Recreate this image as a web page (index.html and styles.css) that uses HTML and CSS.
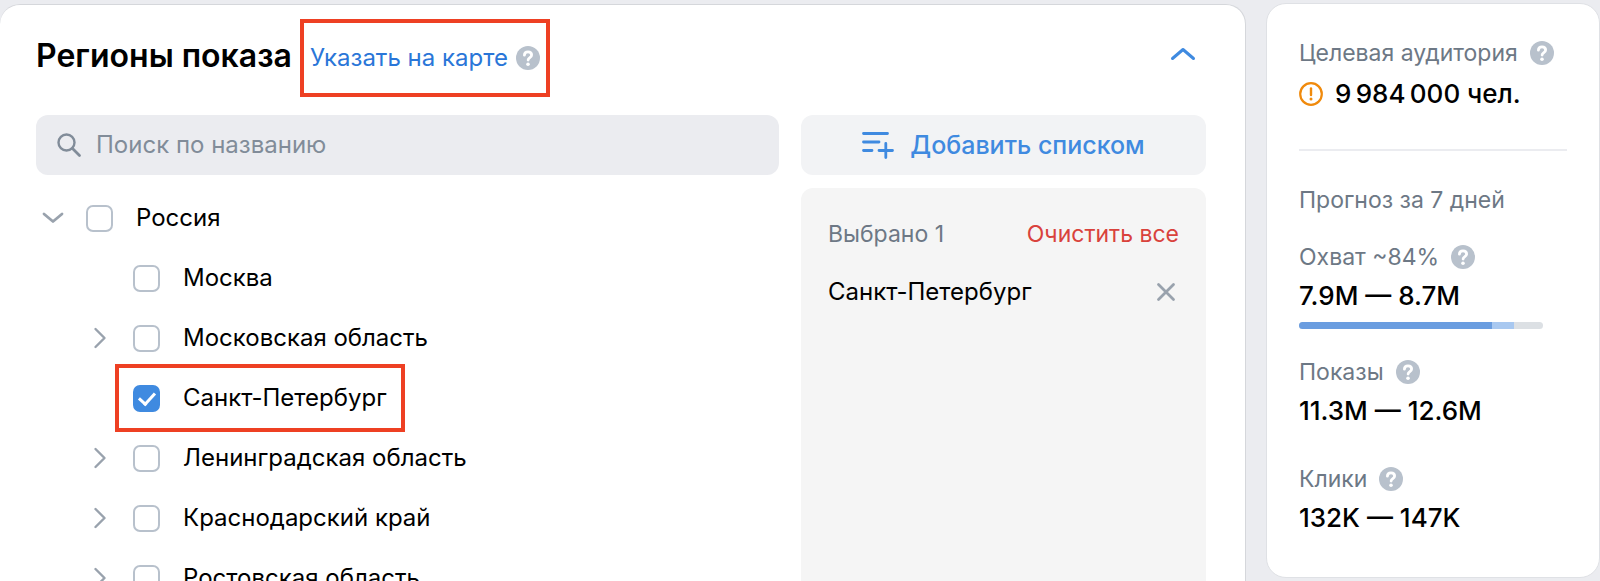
FILE: index.html
```html
<!DOCTYPE html>
<html lang="ru">
<head>
    <meta charset="UTF-8">
    <meta name="viewport" content="width=device-width, initial-scale=1.0">
    <title>Регионы показа</title>
    <link rel="stylesheet" href="styles.css">
</head>
<body>

<!-- Общие иконки -->
<svg class="sprite" aria-hidden="true">
    <symbol id="icon-help" viewBox="0 0 24 24">
        <circle cx="12" cy="12" r="12" fill="#b8c1cc"/>
        <path d="M8.400 9.200C8.400 7 10 5.800 12 5.800s3.600 1.200 3.600 3.100c0 1.400-.8 2.100-1.800 2.800-1.200.8-1.700 1.300-1.700 2.300" fill="none" stroke="#fff" stroke-width="2.800" stroke-linecap="round"/>
        <circle cx="12" cy="18.200" r="1.800" fill="#fff"/>
    </symbol>
    <symbol id="icon-right" viewBox="0 0 14 22">
        <path d="M2.500 2l9 9-9 9" fill="none" stroke="#99a2ad" stroke-width="2.400" stroke-linecap="round" stroke-linejoin="round"/>
    </symbol>
</svg>

<main class="regions">
    <header class="regions-header">
        <h2>Регионы показа</h2>
        <div class="map-link">
            <a href="#map">Указать на карте</a>
            <svg class="help"><use href="#icon-help"/></svg>
        </div>
        <button class="collapse" type="button" aria-label="Свернуть">
            <svg width="26" height="14" viewBox="0 0 26 14"><path d="M2.500 11.500L13 2.500l10.500 9" fill="none" stroke="#3f8ae0" stroke-width="3" stroke-linecap="round" stroke-linejoin="round"/></svg>
        </button>
    </header>

    <div class="regions-grid">
        <label class="search">
            <svg width="26" height="26" viewBox="0 0 26 26"><circle cx="10.500" cy="10.500" r="8" fill="none" stroke="#818c99" stroke-width="2.400"/><path d="M16.500 16.500l7 7" stroke="#818c99" stroke-width="2.800" stroke-linecap="round"/></svg>
            <input type="search" placeholder="Поиск по названию" aria-label="Поиск по названию">
        </label>

        <button class="add-list" type="button">
            <svg width="32" height="28" viewBox="0 0 32 28"><path d="M1.500 2.500h24M1.500 11h15.500M1.500 19.500h8.500M17 19.500h13.500M23.800 12.500v14" fill="none" stroke="#3f8ae0" stroke-width="2.800" stroke-linecap="round"/></svg>
            Добавить списком
        </button>

        <ul class="tree">
            <li class="row root">
                <button class="toggle" type="button" aria-label="Свернуть Россия">
                    <svg width="22" height="12" viewBox="0 0 22 12"><path d="M2 2l9 7.500L20 2" fill="none" stroke="#99a2ad" stroke-width="2.800" stroke-linecap="round" stroke-linejoin="round"/></svg>
                </button>
                <label><input type="checkbox">Россия</label>
            </li>
            <li class="row">
                <span class="toggle"></span>
                <label><input type="checkbox">Москва</label>
            </li>
            <li class="row">
                <button class="toggle" type="button" aria-label="Раскрыть Московская область"><svg class="arrow"><use href="#icon-right"/></svg></button>
                <label><input type="checkbox">Московская область</label>
            </li>
            <li class="row">
                <span class="toggle"></span>
                <label class="marked"><input type="checkbox" checked>Санкт-Петербург</label>
            </li>
            <li class="row">
                <button class="toggle" type="button" aria-label="Раскрыть Ленинградская область"><svg class="arrow"><use href="#icon-right"/></svg></button>
                <label><input type="checkbox">Ленинградская область</label>
            </li>
            <li class="row">
                <button class="toggle" type="button" aria-label="Раскрыть Краснодарский край"><svg class="arrow"><use href="#icon-right"/></svg></button>
                <label><input type="checkbox">Краснодарский край</label>
            </li>
            <li class="row">
                <button class="toggle" type="button" aria-label="Раскрыть Ростовская область"><svg class="arrow"><use href="#icon-right"/></svg></button>
                <label><input type="checkbox">Ростовская область</label>
            </li>
        </ul>

        <section class="selected">
            <div class="selected-head">
                <span>Выбрано 1</span>
                <button class="clear" type="button">Очистить все</button>
            </div>
            <div class="selected-item">
                <span>Санкт-Петербург</span>
                <button class="remove" type="button" aria-label="Удалить">
                    <svg width="20" height="20" viewBox="0 0 20 20"><path d="M2.500 2.500l15 15M17.500 2.500l-15 15" stroke="#99a2ad" stroke-width="2.800" stroke-linecap="round"/></svg>
                </button>
            </div>
        </section>
    </div>
</main>

<aside class="forecast">
    <div class="audience">
        <div class="label">Целевая аудитория <svg class="help"><use href="#icon-help"/></svg></div>
        <div class="value">
            <svg class="warn" viewBox="0 0 24 24"><circle cx="12" cy="12" r="10.800" fill="none" stroke="#f08a0c" stroke-width="2.200"/><path d="M12 6.500v6.500" stroke="#f08a0c" stroke-width="2.400" stroke-linecap="round"/><circle cx="12" cy="17" r="1.500" fill="#f08a0c"/></svg>
            <span>9&#8198;984&#8198;000 чел.</span>
        </div>
    </div>
    <div class="label period">Прогноз за 7 дней</div>
    <div class="metric">
        <div class="label">Охват ~84% <svg class="help"><use href="#icon-help"/></svg></div>
        <div class="value">7.9M — 8.7M</div>
        <div class="bar">
            <span class="bar-min" style="width: 79%"></span>
            <span class="bar-max" style="width: 9%"></span>
        </div>
    </div>
    <div class="metric">
        <div class="label">Показы <svg class="help"><use href="#icon-help"/></svg></div>
        <div class="value">11.3M — 12.6M</div>
    </div>
    <div class="metric">
        <div class="label">Клики <svg class="help"><use href="#icon-help"/></svg></div>
        <div class="value">132K — 147K</div>
    </div>
</aside>

</body>
</html>
```
FILE: styles.css
```css
* {
    box-sizing: border-box;
}
body {
    margin: 0;
    height: 100vh;
    overflow: hidden;
    display: flex;
    align-items: flex-start;
    gap: 20px;
    padding: 3px 0 0;
    background-color: #ebecf0;
    color: #000;
    font-family: Inter, "Noto Sans", sans-serif;
    font-size: 24px;
    line-height: 32px;
}
button {
    border: none;
    padding: 0;
    background: none;
    font: inherit;
    cursor: pointer;
}
svg {
    display: block;
    flex: none;
}
.sprite {
    position: absolute;
    width: 0;
    height: 0;
}
.help {
    width: 24px;
    height: 24px;
}

/* Регионы */
.regions {
    flex: 1;
    margin-top: 1px;
    padding: 14px 39px 40px 36px;
    background-color: #fff;
    border: 1px solid #d5d7db;
    border-left: none;
    border-radius: 20px;
}
.regions-header {
    display: flex;
    align-items: center;
    margin-bottom: 18px;
}
.regions-header h2 {
    margin: 0 8px 4px 0;
    font-size: 32px;
    font-weight: 600;
    line-height: 40px;
}
.map-link {
    display: flex;
    align-items: center;
    gap: 8px;
    height: 78px;
    padding: 0 6px;
    border: 4px solid #ee4023;
}
.map-link a {
    color: #2a76d8;
    text-decoration: none;
}
.collapse {
    margin: 0 10px 8px auto;
}
.regions-grid {
    display: grid;
    grid-template-columns: 1fr 405px;
    gap: 13px 22px;
}
.search {
    display: flex;
    align-items: center;
    gap: 14px;
    height: 60px;
    padding: 0 20px;
    background-color: #ebecf0;
    border-radius: 12px;
}
.search input {
    flex: 1;
    border: none;
    outline: none;
    padding: 0;
    background: none;
    font: inherit;
}
.search input::placeholder {
    color: #818c99;
}
.add-list {
    display: flex;
    align-items: center;
    justify-content: center;
    gap: 16px;
    height: 60px;
    border-radius: 12px;
    background-color: #f2f3f5;
    color: #3f8ae0;
    font-size: 25px;
    font-weight: 500;
}

/* Дерево */
.tree {
    list-style: none;
    margin: 0;
    padding: 0;
}
.row {
    display: flex;
    align-items: center;
    height: 60px;
    padding-left: 47px;
}
.root {
    padding-left: 0;
}
.toggle {
    display: flex;
    justify-content: center;
    width: 34px;
    margin-right: 16px;
}
.arrow {
    width: 14px;
    height: 22px;
}
.row label {
    position: relative;
    display: flex;
    align-items: center;
    gap: 23px;
}
.row input {
    appearance: none;
    width: 27px;
    height: 27px;
    margin: 0;
    border: 2px solid #b8c1cc;
    border-radius: 7px;
}
.row input:checked {
    border-color: #3f8ae0;
    background-color: #3f8ae0;
}
.row input:checked::after {
    content: "";
    display: block;
    width: 7px;
    height: 13px;
    margin: 2px auto;
    border: solid #fff;
    border-width: 0 3px 3px 0;
    transform: rotate(42deg);
}
/* Красная рамка поверх строки */
.marked::after {
    content: "";
    position: absolute;
    inset: -18px;
    border: 4px solid #ee4023;
}

/* Выбранные */
.selected {
    padding: 30px 27px;
    border-radius: 12px;
    background-color: #f5f5f5;
}
.selected-head,
.selected-item {
    display: flex;
    align-items: center;
    justify-content: space-between;
}
.selected-head {
    margin-bottom: 26px;
    color: #6d7885;
    font-size: 23px;
}
.clear {
    color: #d9423c;
}
.remove {
    margin-right: 3px;
}

/* Прогноз */
.forecast {
    width: 334px;
    padding: 33px 32px 43px;
    background-color: #fff;
    border: 1px solid #dfe1e5;
    border-radius: 20px;
}
.label {
    display: flex;
    align-items: center;
    gap: 12px;
    color: #6d7885;
    font-size: 23px;
}
.value {
    display: flex;
    align-items: center;
    gap: 12px;
    margin-top: 7px;
    font-size: 26px;
    font-weight: 500;
}
.warn {
    width: 24px;
    height: 24px;
}
.audience {
    padding-bottom: 39px;
    margin-bottom: 33px;
    border-bottom: 2px solid #ebecf0;
}
.audience .value {
    margin-top: 9px;
}
.period {
    margin-bottom: 25px;
}
.metric + .metric {
    margin-top: 36px;
}
.bar {
    display: flex;
    width: 244px;
    height: 7px;
    margin: 10px 0 -9px;
    border-radius: 4px;
    overflow: hidden;
    background-color: #dce0e4;
}
.bar-min {
    background-color: #6a9de0;
}
.bar-max {
    background-color: #a8c8f0;
}
```
